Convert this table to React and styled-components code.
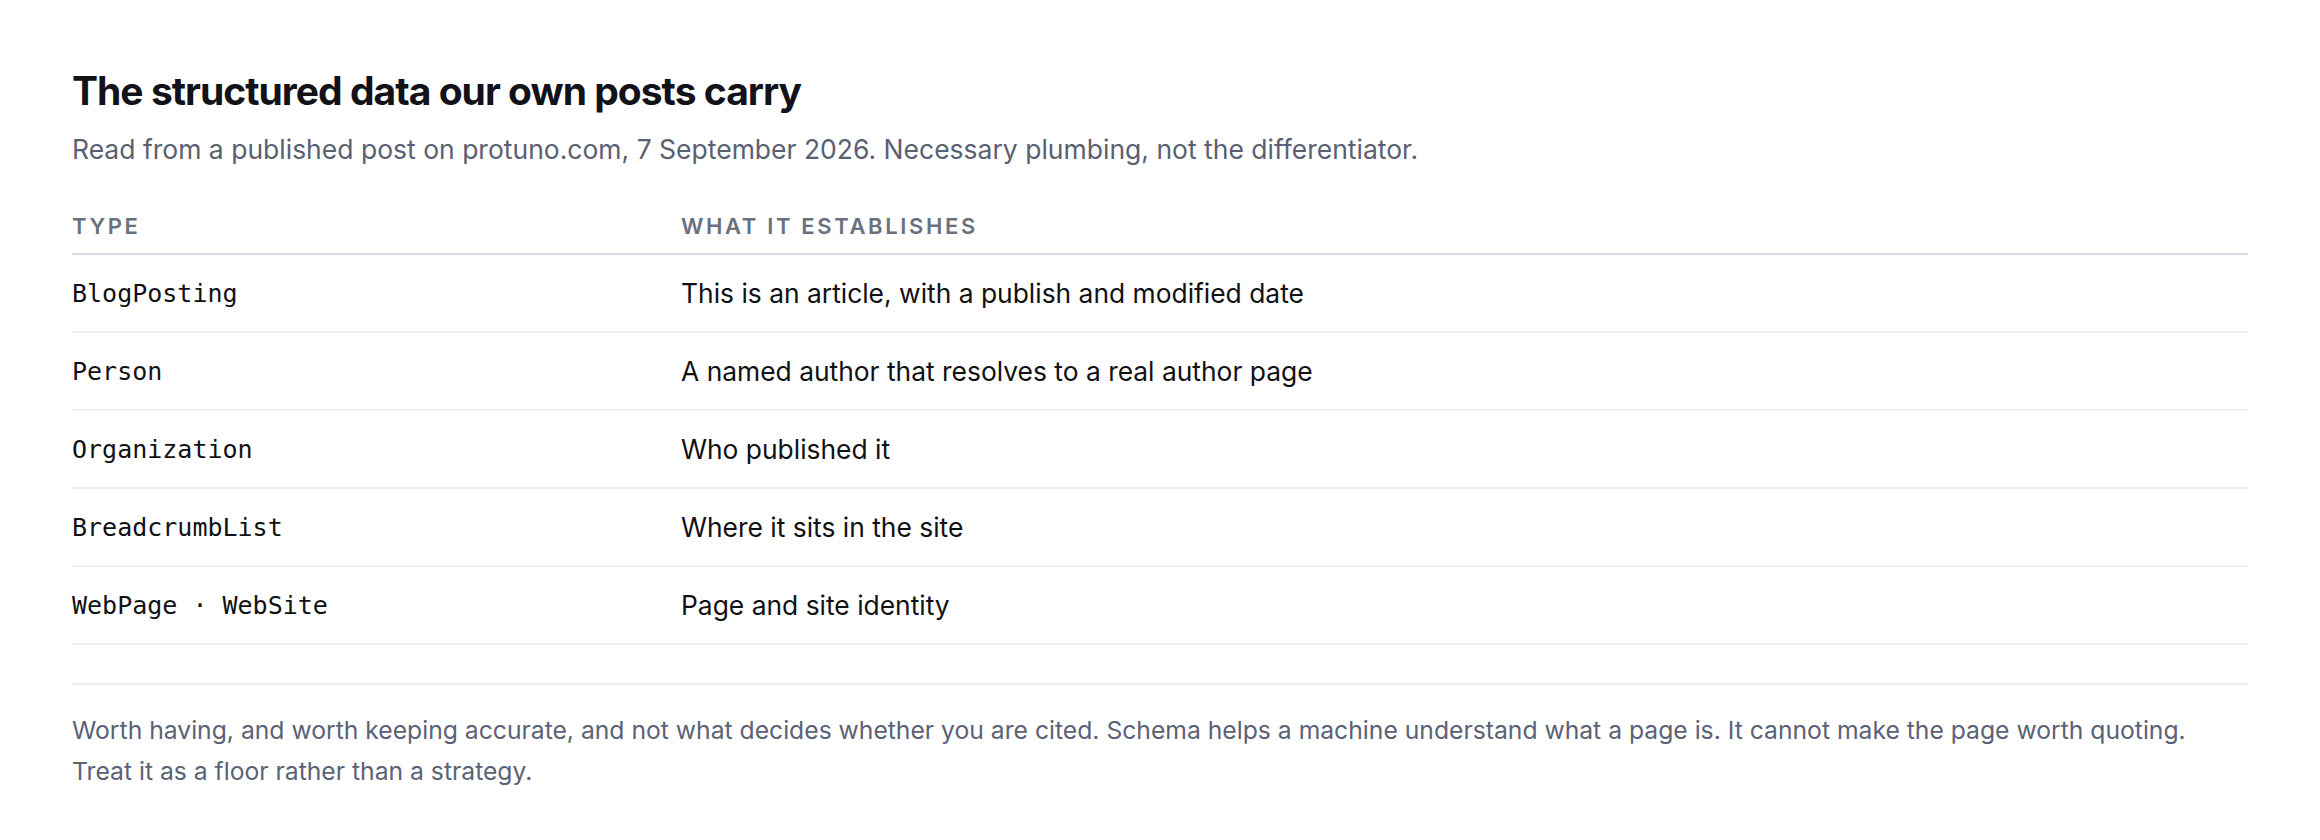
import React from "react";
import styled, { createGlobalStyle } from "styled-components";

const GlobalStyle = createGlobalStyle`
  body {
    margin: 0;
    background: #ffffff;
    font-family: Inter, "Noto Sans", sans-serif;
  }
`;

const Page = styled.section`
  padding: 67px 72px 40px;
  box-sizing: border-box;
`;

const Title = styled.h2`
  margin: 0;
  font-size: 39px;
  line-height: 48px;
  font-weight: 700;
  letter-spacing: -0.025em;
  color: #121218;
`;

const Lede = styled.p`
  margin: 16px 0 0;
  font-size: 26.5px;
  line-height: 36px;
  color: #5a6072;
`;

const Table = styled.div`
  margin-top: 45px;
`;

const HeadRow = styled.div`
  display: grid;
  grid-template-columns: 609px 1fr;
  padding-bottom: 13px;
  border-bottom: 2px solid #d9dbe4;
`;

const HeadCell = styled.div`
  font-size: 22px;
  line-height: 28px;
  font-weight: 600;
  letter-spacing: 0.12em;
  text-transform: uppercase;
  color: #6b7080;
`;

const Row = styled.div`
  display: grid;
  grid-template-columns: 609px 1fr;
  align-items: center;
  height: 76px;
  border-bottom: 2px solid #eeeef2;
`;

const TypeCell = styled.code`
  font-family: "DejaVu Sans Mono", "Liberation Mono", monospace;
  font-size: 25px;
  color: #111114;
`;

const DescCell = styled.div`
  font-size: 26.4px;
  color: #111114;
`;

const Note = styled.p`
  margin: 38px 0 0;
  padding-top: 25px;
  border-top: 2px solid #ececf0;
  font-size: 24.7px;
  line-height: 41px;
  color: #5b6275;
`;

const rows = [
  ["BlogPosting", "This is an article, with a publish and modified date"],
  ["Person", "A named author that resolves to a real author page"],
  ["Organization", "Who published it"],
  ["BreadcrumbList", "Where it sits in the site"],
  ["WebPage · WebSite", "Page and site identity"],
];

const App = () => {
  return (
    <Page>
      <GlobalStyle />
      <Title>The structured data our own posts carry</Title>
      <Lede>
        Read from a published post on protuno.com, 7 September 2026. Necessary
        plumbing, not the differentiator.
      </Lede>
      <Table>
        <HeadRow>
          <HeadCell>Type</HeadCell>
          <HeadCell>What it establishes</HeadCell>
        </HeadRow>
        {rows.map(([type, desc]) => (
          <Row key={type}>
            <TypeCell>{type}</TypeCell>
            <DescCell>{desc}</DescCell>
          </Row>
        ))}
      </Table>
      <Note>
        Worth having, and worth keeping accurate, and not what decides whether
        you are cited. Schema helps a machine understand what a page is. It
        cannot make the page worth quoting. Treat it as a floor rather than a
        strategy.
      </Note>
    </Page>
  );
};

export default App;
